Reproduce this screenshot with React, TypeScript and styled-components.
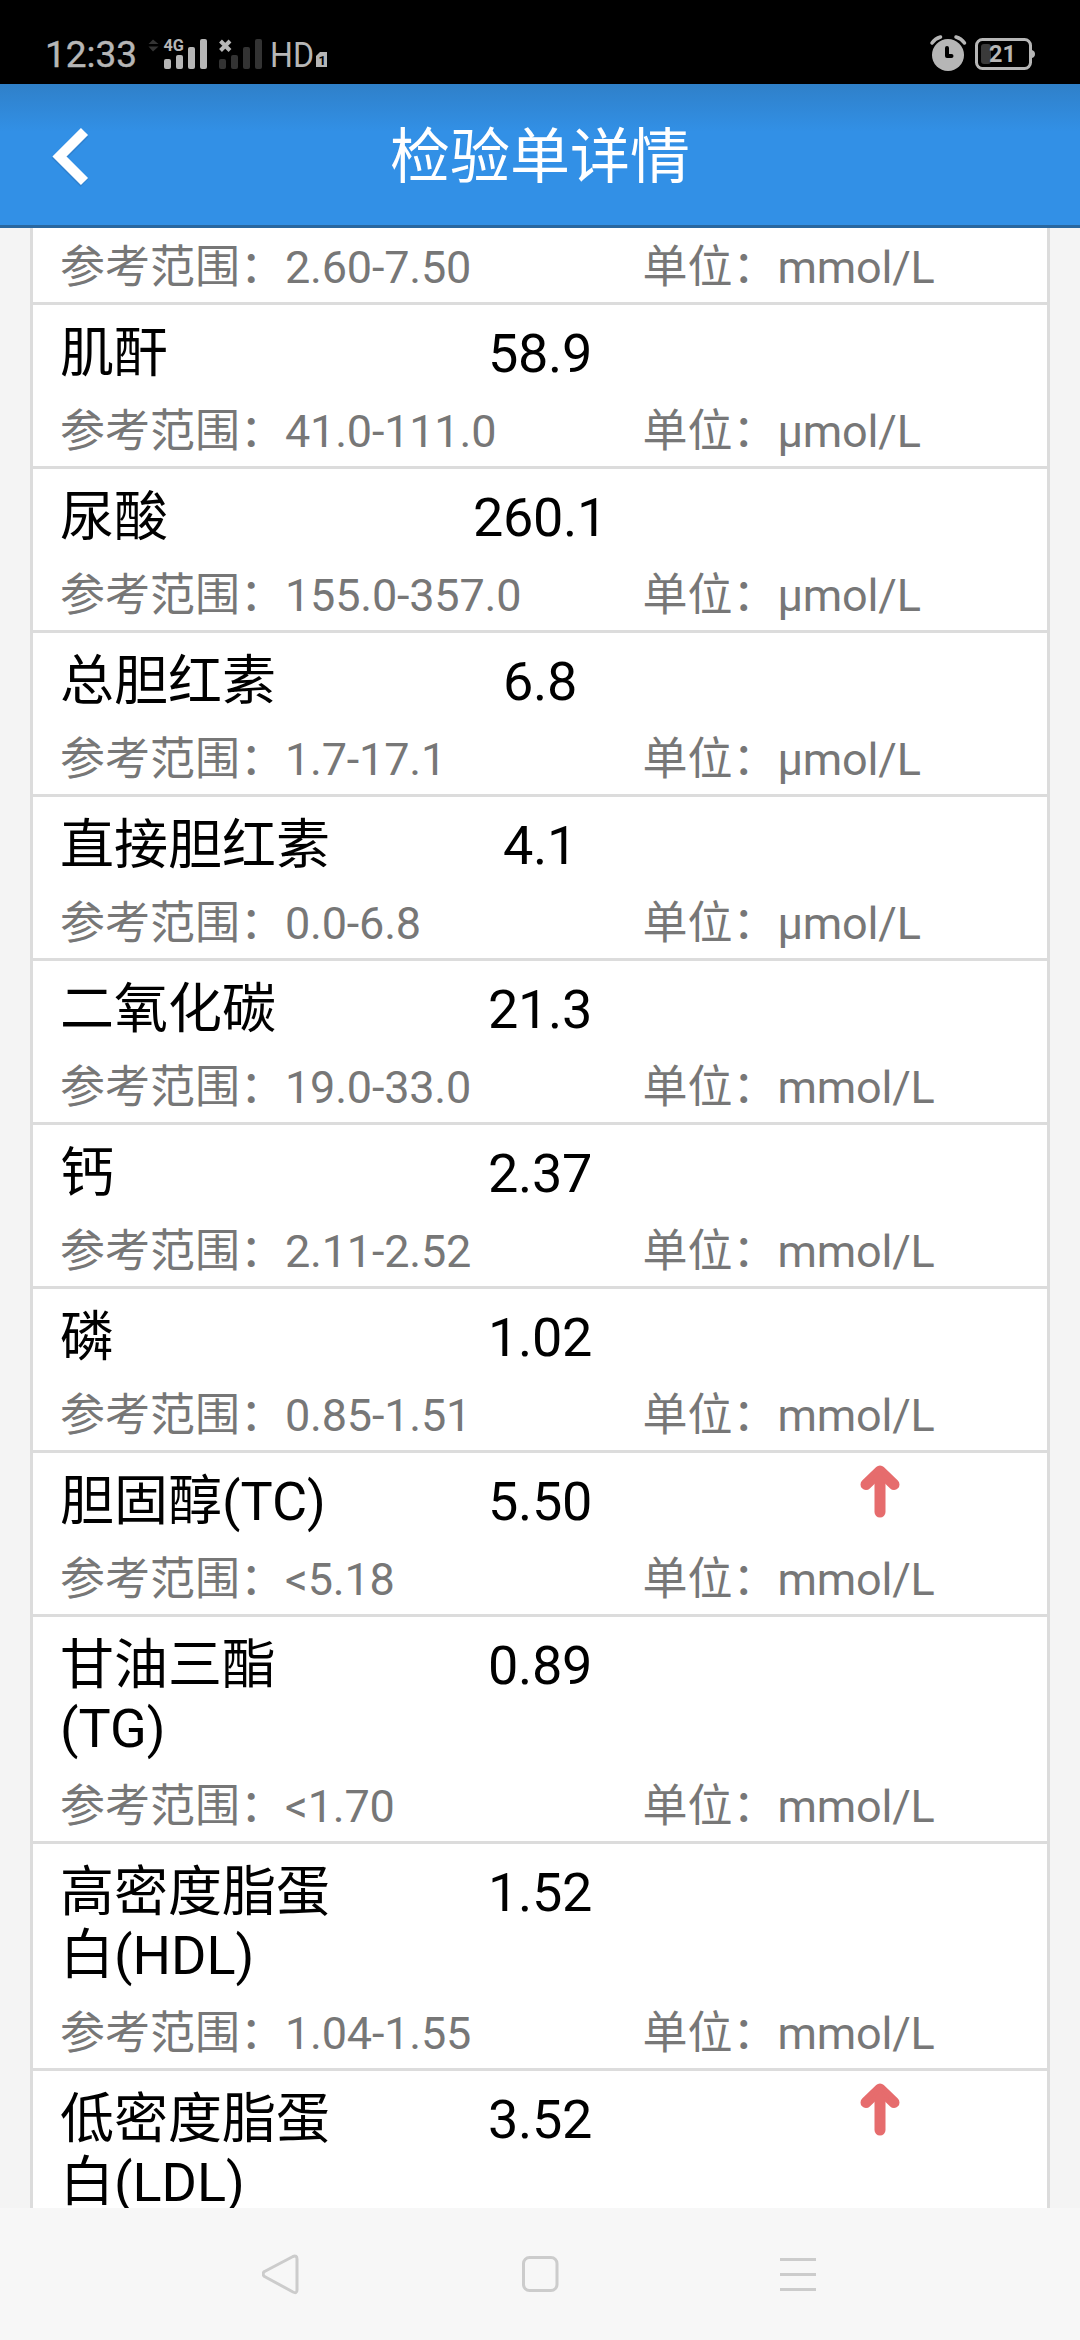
import React from "react";
import styled, { createGlobalStyle } from "styled-components";

const GlobalStyle = createGlobalStyle`
  * { box-sizing: border-box; }
  html, body { margin: 0; padding: 0; background: #f4f4f4; }
  body { font-family: Roboto, "Noto Sans CJK SC", sans-serif; }
`;

const Screen = styled.div`
  width: 1080px;
  height: 2340px;
  display: flex;
  flex-direction: column;
  overflow: hidden;
  background: #f4f4f4;
`;

const StatusBar = styled.div`
  flex: none;
  height: 84px;
  background: #000;
  color: #b6b6b6;
  display: flex;
  align-items: flex-start;
  justify-content: space-between;
  padding: 34px 44px 0 45px;
`;

const StatusGroup = styled.div`
  display: flex;
  align-items: flex-start;
`;

const Clock = styled.span`
  width: 103px;
  font-size: 37px;
  line-height: 42px;
  -webkit-text-stroke: 0.4px #b6b6b6;
`;

const StatusIcons = styled.svg`
  display: block;
  flex: none;
`;

const Header = styled.header`
  flex: none;
  height: 144px;
  display: grid;
  grid-template-columns: 120px 1fr 120px;
  align-items: center;
  border-bottom: 3px solid #29679f;
  background: linear-gradient(#2f80c9, #3290e6 48px);
`;

const BackButton = styled.button`
  border: 0;
  padding: 5px 0 0 48px;
  background: none;
  display: flex;
`;

const Title = styled.h1`
  margin: 7px 0 0;
  text-align: center;
  font-size: 60px;
  line-height: 84px;
  font-weight: 400;
  color: #fff;
`;

const Content = styled.main`
  flex: 1;
  min-height: 0;
  overflow: hidden;
  padding: 0 30px;
`;

const Report = styled.div`
  background: #fff;
  border: solid #dcdcdc;
  border-width: 0 3px;
`;

const Item = styled.section`
  border-bottom: 3px solid #dcdcdc;
  padding-bottom: 8px;
`;

const ResultLine = styled.div`
  display: grid;
  grid-template-columns: repeat(3, 338px);
  padding-top: 17px;
  margin-bottom: 20px;
  font-size: 54px;
  line-height: 63px;
  color: #000;
`;

const Name = styled.div`
  padding: 0 27px;
`;

const Value = styled.div`
  text-align: center;
  letter-spacing: -0.3px;
`;

const Flag = styled.div`
  display: flex;
  justify-content: center;
  align-items: flex-start;
  height: 54px;
  margin-top: -7px;
  padding-left: 4px;
`;

const DetailLine = styled.div`
  display: grid;
  grid-template-columns: 582.5px 1fr;
  padding: 0 27px;
  font-size: 45px;
  line-height: 53px;
  color: #777;
`;

const Reading = styled.span`
  letter-spacing: -0.2px;
`;

const FirstItem = styled(Item)`
  padding-top: 13px;
`;

const NavBar = styled.nav`
  flex: none;
  height: 132px;
  background: #f7f7f7;
  display: flex;
  justify-content: center;
  align-items: center;
  gap: 218px;
`;

const NavIcon = styled.svg`
  display: block;
  width: 40px;
  height: 42px;
  fill: none;
  stroke: #ccc;
  stroke-width: 3;
  stroke-linejoin: round;
`;

type Result = { name?: string; value?: string; range: string; unit: string; high?: boolean };

const results: Result[] = [
  { range: "2.60-7.50", unit: "mmol/L" },
  { name: "肌酐", value: "58.9", range: "41.0-111.0", unit: "μmol/L" },
  { name: "尿酸", value: "260.1", range: "155.0-357.0", unit: "μmol/L" },
  { name: "总胆红素", value: "6.8", range: "1.7-17.1", unit: "μmol/L" },
  { name: "直接胆红素", value: "4.1", range: "0.0-6.8", unit: "μmol/L" },
  { name: "二氧化碳", value: "21.3", range: "19.0-33.0", unit: "mmol/L" },
  { name: "钙", value: "2.37", range: "2.11-2.52", unit: "mmol/L" },
  { name: "磷", value: "1.02", range: "0.85-1.51", unit: "mmol/L" },
  { name: "胆固醇(TC)", value: "5.50", range: "<5.18", unit: "mmol/L", high: true },
  { name: "甘油三酯(TG)", value: "0.89", range: "<1.70", unit: "mmol/L" },
  { name: "高密度脂蛋白(HDL)", value: "1.52", range: "1.04-1.55", unit: "mmol/L" },
  { name: "低密度脂蛋白(LDL)", value: "3.52", range: "<3.37", unit: "mmol/L", high: true },
];

const UpArrow = () => (
  <svg width="42" height="56" viewBox="0 0 42 56" fill="#e66c6d" stroke="#e66c6d" strokeLinecap="round" strokeLinejoin="round">
    <path d="M21 9V49" strokeWidth="11" />
    <path d="M7 21.5L21 8L35 21.5" strokeWidth="11" fill="none" />
    <path d="M21 9L13 18H29Z" strokeWidth="2" />
  </svg>
);

const Details = ({ range, unit }: { range: string; unit: string }) => (
  <DetailLine>
    <span>参考范围：<Reading>{range}</Reading></span>
    <span>单位：<Reading>{unit}</Reading></span>
  </DetailLine>
);

const ResultItem = ({ name, value, range, unit, high }: Result) =>
  name ? (
    <Item>
      <ResultLine>
        <Name>{name}</Name>
        <Value>{value}</Value>
        {high && (
          <Flag>
            <UpArrow />
          </Flag>
        )}
      </ResultLine>
      <Details range={range} unit={unit} />
    </Item>
  ) : (
    <FirstItem>
      <Details range={range} unit={unit} />
    </FirstItem>
  );

const SignalIcons = () => (
  <StatusIcons width="182" height="40" viewBox="148 34 182 40" fill="#b6b6b6">
    <path d="M153 39.5L158.500 44H148.500ZM153 51.500L148.500 46.500H158.500Z" fill="#343434" />
    <text x="163.500" y="51" fontSize="16.500" fontWeight="700" textLength="20.500" lengthAdjust="spacingAndGlyphs">4G</text>
    <rect x="164" y="59" width="7" height="10" rx="2" />
    <rect x="176" y="55" width="7" height="14" rx="2" />
    <rect x="188" y="47" width="7" height="22" rx="2" />
    <rect x="200" y="39" width="7" height="30" rx="2" />
    <path d="M220.500 41L230 50.500M230 41L220.500 50.500" stroke="#b6b6b6" strokeWidth="4" />
    <g fill="#333">
      <rect x="219" y="59" width="7" height="10" rx="2" />
      <rect x="231" y="55" width="7" height="14" rx="2" />
      <rect x="243" y="47" width="7" height="22" rx="2" />
      <rect x="255" y="39" width="7" height="30" rx="2" />
    </g>
    <text x="270" y="67" fontSize="35" textLength="44" lengthAdjust="spacingAndGlyphs">HD</text>
    <path d="M320 52H327V67H316V56Z" />
    <text x="318.500" y="65" fontSize="13" fontWeight="700" fill="#000">1</text>
  </StatusIcons>
);

const PowerIcons = () => (
  <StatusIcons width="108" height="40" viewBox="928 34 108 40" fill="#b6b6b6">
    <circle cx="948" cy="55" r="16" />
    <path d="M932 43Q935 38.500 940.500 37M956 37Q961.500 38.500 964.500 43" fill="none" stroke="#b6b6b6" strokeWidth="3.500" strokeLinecap="round" />
    <path d="M947 48V56H951.500" fill="none" stroke="#000" strokeWidth="4" strokeLinecap="round" strokeLinejoin="round" />
    <rect x="976.500" y="39.500" width="54" height="29" rx="6" fill="none" stroke="#b6b6b6" strokeWidth="3" />
    <path d="M1032 50Q1035 51 1035 54Q1035 57 1032 58Z" />
    <rect x="981" y="44" width="10" height="20" rx="3" fill="#3a3a3a" />
    <text x="989" y="62" fontSize="24" fontWeight="700" textLength="27" lengthAdjust="spacingAndGlyphs">21</text>
  </StatusIcons>
);

export default function App() {
  return (
    <>
      <GlobalStyle />
      <Screen>
        <StatusBar>
          <StatusGroup>
            <Clock>12:33</Clock>
            <SignalIcons />
          </StatusGroup>
          <PowerIcons />
        </StatusBar>
        <Header>
          <BackButton aria-label="返回">
            <svg width="44" height="64" viewBox="48 125 44 64" fill="none">
              <path d="M84.500 133L59.500 158L84.500 183" stroke="#2a6aa8" strokeOpacity="0.35" strokeWidth="11" />
              <path d="M84.500 131.500L59.500 156.500L84.500 181.500" stroke="#fff" strokeWidth="10" />
            </svg>
          </BackButton>
          <Title>检验单详情</Title>
        </Header>
        <Content>
          <Report>
            {results.map((result, index) => (
              <ResultItem key={index} {...result} />
            ))}
          </Report>
        </Content>
        <NavBar>
          <NavIcon viewBox="262 2253 40 42">
            <path d="M264.500 2271.500Q261.500 2274 264.500 2276.500L293 2292Q297 2294 297 2290V2259Q297 2255 293 2256.500Z" />
          </NavIcon>
          <NavIcon viewBox="520 2253 40 42">
            <rect x="523.500" y="2257.500" width="33.500" height="33" rx="6" />
          </NavIcon>
          <NavIcon viewBox="778 2253 40 42">
            <path d="M780 2259.500H816M780 2274.500H816M780 2289.500H816" />
          </NavIcon>
        </NavBar>
      </Screen>
    </>
  );
}
